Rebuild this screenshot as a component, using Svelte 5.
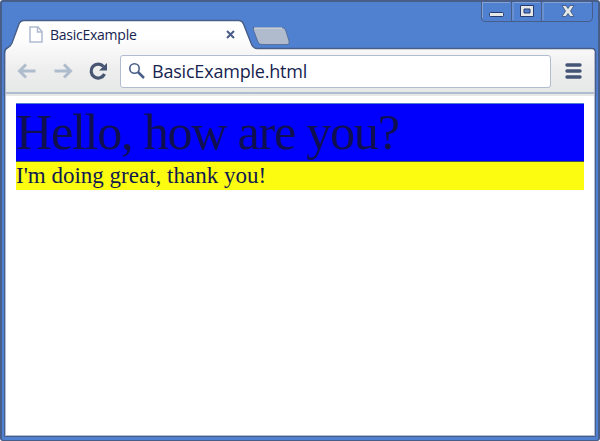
<script>
  const page = [
    { text: 'Hello, how are you?', kind: 'question' },
    { text: "I'm doing great, thank you!", kind: 'answer' }
  ];
  const title = 'BasicExample';
</script>

<div class="window">
  <header>
    <svg class="shape" width="600" height="96" viewBox="0 0 600 96" aria-hidden="true">
      <defs>
        <linearGradient id="bar" x1="0" y1="20" x2="0" y2="92" gradientUnits="userSpaceOnUse">
          <stop offset="0" stop-color="#fff" />
          <stop offset=".25" stop-color="#fefefe" />
          <stop offset=".65" stop-color="#eeefee" />
          <stop offset="1" stop-color="#e6e8e7" />
        </linearGradient>
      </defs>
      <path d="M5.5 96V52Q5.5 49 9 47.5Q11 46.5 12 43L19 24Q20.5 20.5 24 20.5H239Q242 20.5 243.5 24L251 43Q253 48.5 257 48.5H592Q595.5 48.5 595.5 53V96Z" fill="url(#bar)" />
      <path d="M4.5 96V52Q4.5 49 8 47.5Q10.5 46.5 12 43L19 24Q20.5 20.5 24 20.5H239Q242 20.5 243.5 24L251 43Q253 48.5 257 48.5H592Q595.5 48.5 595.5 53V96" fill="none" stroke="#485e88" stroke-width="1.4" />
      <path d="M5.5 96V53M594.5 96V53" stroke="#afbbcd" />
      <path d="M253 27.5H282Q284.5 27.5 285.5 30L289 41Q290 44.5 287 44.5H262Q259 44.5 258 42L253.5 30Q252.5 27.5 255 27.5Z" fill="#b0bccd" stroke="#485e88" stroke-width=".7" />
      <path d="M254 28H282" stroke="#dde3e5" />
    </svg>

    <div class="strip">
      <div class="tab">
        <svg width="14" height="18" viewBox="0 0 14 18"><path d="M1 1H9L13 5.5V16H1ZM8.5 1V6H13" fill="#fff" stroke="#aebbce" stroke-width="1.5" /></svg>
        <span class="title">{title}</span>
        <svg class="close" width="9" height="9" viewBox="0 0 9 9"><path d="M1 1L8 8M8 1L1 8" stroke="#485e88" stroke-width="2" /></svg>
      </div>
      <div class="controls">
        <svg width="113" height="22" viewBox="0 0 113 22">
          <path d="M1.5 1V19Q2 21.5 5 21.5H109Q112 21.5 112.500 18V1M31.5 1V21M61.5 1V21" fill="none" stroke="#485e88" />
          <path d="M2.5 2V18M33 2V20M63 2V20M3 2.5H30M34 2.5H60M64 2.5H111" fill="none" stroke="#91a9d0" stroke-width=".8" />
          <rect x="9.500" y="12.5" width="14" height="4" rx="1" fill="#e6e8e7" stroke="#263b70" />
          <path d="M40.5 5.5H53.5V16.5H40.5ZM44 9V13H50V9Z" fill-rule="evenodd" fill="#e6e8e7" stroke="#263b70" />
          <path d="M82 5.5H86L88 8.5L90 5.5H94L90.5 11L94 16.5H90L88 13.5L86 16.5H82L85.5 11Z" fill="#e6e8e7" stroke="#35507f" stroke-width=".8" />
        </svg>
      </div>
    </div>

    <div class="toolbar">
      <svg width="20" height="16" viewBox="0 0 20 16"><path d="M18.5 8H3M9 1.5L2.5 8L9 14.5" fill="none" stroke="#afbcce" stroke-width="3" /></svg>
      <svg class="forward" width="20" height="16" viewBox="0 0 20 16"><path d="M1.5 8H17M11 1.5L17.5 8L11 14.5" fill="none" stroke="#afbcce" stroke-width="3" /></svg>
      <svg class="reload" width="20" height="20" viewBox="0 0 20 20"><path d="M15.5 5.5A7 7 0 1 0 16.5 13" fill="none" stroke="#485673" stroke-width="3.2" /><path d="M19 2V9.5H11Z" fill="#485673" /></svg>
      <div class="address">
        <svg width="18" height="18" viewBox="0 0 18 18"><circle cx="6.5" cy="6.5" r="4.7" fill="none" stroke="#485e88" stroke-width="1.6" /><path d="M10 10L16 16" stroke="#485e88" stroke-width="2.5" /></svg>
        <span>{title}.html</span>
      </div>
      <svg class="menu" width="17" height="16" viewBox="0 0 17 16"><path d="M2 2H15M2 8H15M2 14H15" stroke="#445477" stroke-width="3.4" stroke-linecap="round" /></svg>
    </div>
  </header>

  <main>
    {#each page as line}
      <div class={line.kind}><span>{line.text}</span></div>
    {/each}
  </main>
</div>

<style>
  :global(body) { margin: 0; background: #fff; overflow: hidden; }
  .window {
    box-sizing: border-box;
    width: 600px;
    height: 441px;
    display: flex;
    flex-direction: column;
    background: #5080d0;
    border: solid #485e88;
    border-width: 2px 2px 1px;
    border-radius: 3px;
    position: relative;
  }
  header { position: relative; height: 92px; flex: none; }
  .shape { position: absolute; left: -2px; top: -2px; }
  svg { display: block; flex: none; }
  .strip { position: relative; display: flex; justify-content: space-between; height: 47px; }
  .tab {
    box-sizing: border-box;
    display: flex;
    align-items: center;
    width: 240px;
    height: 29px;
    margin-top: 18px;
    padding: 0 6px 0 27px;
    font: 14px/18px "Open Sans", "Noto Sans", sans-serif;
    color: #172450;
  }
  .title { margin-left: 7px; white-space: nowrap; letter-spacing: -.25px; }
  .close { margin-left: auto; margin-right: 1px; }
  .controls { margin: -2px 5px 0 0; }
  .toolbar {
    box-sizing: border-box;
    position: relative;
    display: flex;
    align-items: center;
    height: 45px;
    margin: 0 4px;
    padding: 0 12px 0 11px;
    border-bottom: 2px solid #b0bdd0;
  }
  .forward { margin-left: 16px; }
  .reload { margin-left: 15px; }
  .address {
    box-sizing: border-box;
    display: flex;
    align-items: center;
    flex: 1;
    height: 33px;
    margin: 1px 14px 0 12px;
    padding-left: 7px;
    border: 1px solid #b0bdd0;
    border-radius: 3px;
    background: #fff;
    font: 18px/28px "Open Sans", "Noto Sans", sans-serif;
    color: #172450;
  }
  .address span { margin-left: 6px; letter-spacing: -.2px; white-space: nowrap; }
  main {
    box-sizing: border-box;
    flex: 1;
    margin: 0 2px 3px;
    padding: 9px 11px;
    background: #fff;
    border: 1px solid #485e88;
    border-top: 0;
    box-shadow: inset 1px -1px #b0bdd0, inset -1px 0 #b0bdd0;
  }
  .question, .answer { font-family: "Liberation Serif", serif; white-space: nowrap; }
  .question {
    box-sizing: border-box;
    height: 59px;
    border-top: 1px solid #5080d0;
    border-bottom: 1px solid #485e48;
    background: #0000fc;
    color: #101050;
    font-size: 50px;
    line-height: 56px;
    letter-spacing: -1.2px;
  }
  .answer { height: 28px; background: #fcfc10; color: #101850; font-size: 23px; line-height: 27px; }
</style>
